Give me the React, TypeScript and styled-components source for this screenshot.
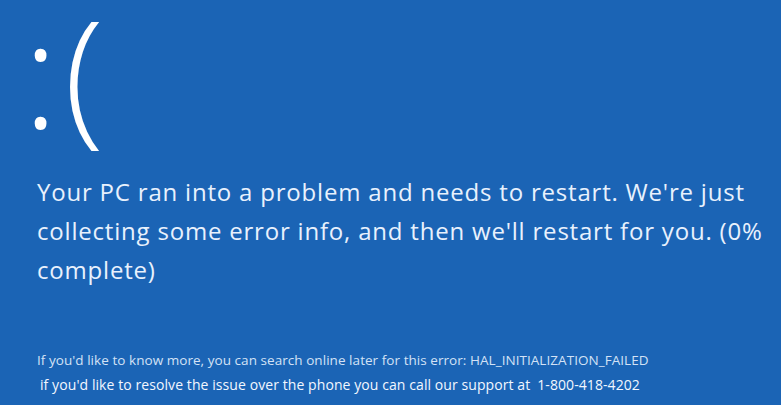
import { FC } from 'react'
import styled, { createGlobalStyle } from 'styled-components'

const GlobalStyle = createGlobalStyle`
  html, body {
    margin: 0;
    padding: 0;
    background: #1b64b5;
  }
  body {
    font-family: 'Open Sans', 'Noto Sans', sans-serif;
    color: #ffffff;
  }
`

const Screen = styled.div`
  width: 781px;
  height: 405px;
  overflow: hidden;
  background: #1b64b5;
  box-sizing: border-box;
  padding: 0 0 0 37px;
  display: flex;
  flex-direction: column;
`

const Face = styled.div`
  font-size: 147px;
  font-weight: 300;
  line-height: 140px;
  height: 140px;
  margin: 1px 0 0 -14px;
  color: #ffffff;
`

const Paren = styled.span`
  margin-left: 6px;
`

const Message = styled.div`
  margin-top: 31px;
  font-size: 24px;
  line-height: 39px;
  letter-spacing: 0.8px;
  color: #e8f1fd;
  width: 740px;
`

const Details = styled.div`
  margin-top: 61px;
  display: flex;
  flex-direction: column;
  gap: 5px;
`

const DetailLine = styled.div<{ $size: number; $weight?: number; $indent?: number; $spacing?: number; $color: string }>`
  font-size: ${(p) => p.$size}px;
  font-weight: ${(p) => p.$weight ?? 400};
  letter-spacing: ${(p) => p.$spacing ?? 0}px;
  line-height: 20px;
  padding-left: ${(p) => p.$indent ?? 0}px;
  color: ${(p) => p.$color};
  white-space: nowrap;
`

const Phone = styled.span`
  margin-left: 7px;
  font-weight: 400;
`

const App: FC = () => {
  return (
    <>
      <GlobalStyle />
      <Screen>
        <Face>
          :<Paren>(</Paren>
        </Face>
        <Message>
          Your PC ran into a problem and needs to restart. We're just collecting some error info, and then we'll restart
          for you. (0% complete)
        </Message>
        <Details>
          <DetailLine $size={13.5} $spacing={0.05} $color="#d3e2f6">
            If you'd like to know more, you can search online later for this error: HAL_INITIALIZATION_FAILED
          </DetailLine>
          <DetailLine $size={14} $weight={500} $indent={3} $spacing={0.08} $color="#f2f7ff">
            if you'd like to resolve the issue over the phone you can call our support at<Phone>1-800-418-4202</Phone>
          </DetailLine>
        </Details>
      </Screen>
    </>
  )
}

export default App
